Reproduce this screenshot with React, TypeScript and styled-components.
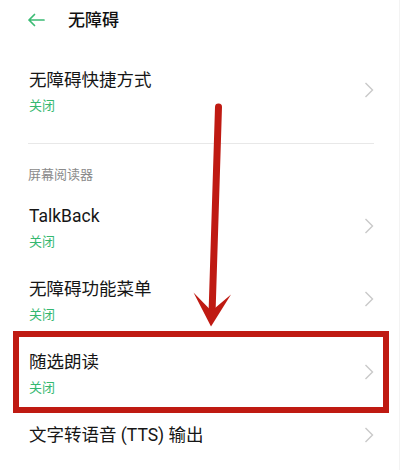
import React from "react";
import styled, { createGlobalStyle } from "styled-components";

const GlobalStyle = createGlobalStyle`
  html, body {
    margin: 0;
    padding: 0;
    background: #ffffff;
  }
  body {
    font-family: "Roboto", "Noto Sans CJK SC", "Noto Sans", sans-serif;
    -webkit-font-smoothing: antialiased;
  }
`;

const Page = styled.div`
  position: relative;
  width: 413px;
  height: 470px;
  overflow: hidden;
  background: #ffffff;
  box-sizing: border-box;
`;

const Screen = styled.div`
  width: 400px;
  height: 470px;
  border-right: 1px solid #f3f3f3;
  box-sizing: border-box;
  display: flex;
  flex-direction: column;
`;

const Header = styled.header`
  height: 40px;
  display: flex;
  align-items: center;
  padding-left: 27px;
  gap: 23px;
`;

const HeaderTitle = styled.h1`
  margin: 0;
  font-size: 17px;
  font-weight: 500;
  color: #111111;
  line-height: 24px;
`;

const Row = styled.div<{ $top: number; $bottom: number }>`
  display: flex;
  align-items: center;
  padding: ${(p) => p.$top}px 25px ${(p) => p.$bottom}px 29px;
`;

const RowText = styled.div`
  flex: 1;
  display: flex;
  flex-direction: column;
`;

const RowTitle = styled.div`
  font-size: 17.5px;
  line-height: 24px;
  color: #161616;
`;

const RowSub = styled.div`
  margin-top: 4px;
  font-size: 13px;
  line-height: 20px;
  color: #35b870;
`;

const Divider = styled.div`
  height: 1px;
  background: #e8e8e8;
  margin: 14px 25px 0 28px;
`;

const SectionHeader = styled.div`
  margin-top: 21px;
  padding: 0 28px 7px;
  font-size: 13px;
  line-height: 20px;
  color: #8a8a8a;
`;

const Chevron = styled.svg`
  width: 10px;
  height: 16px;
  flex: none;
`;

const Highlight = styled.div`
  position: absolute;
  left: 13px;
  top: 331px;
  width: 376px;
  height: 82px;
  box-sizing: border-box;
  border: 6px solid #bf1a12;
  pointer-events: none;
`;

const ArrowLayer = styled.svg`
  position: absolute;
  left: 0;
  top: 0;
  width: 413px;
  height: 470px;
  pointer-events: none;
`;

const ChevronIcon = ({ shift = 0 }: { shift?: number }) => (
  <Chevron viewBox="0 0 10 16" style={shift ? { marginTop: shift } : undefined}>
    <path d="M1.5 1 L8.5 8 L1.5 15" fill="none" stroke="#c9c9c9" strokeWidth="1.4" />
  </Chevron>
);

type Item = { title: string; sub?: string; top: number; bottom: number };

const items: Item[] = [
  { title: "TalkBack", sub: "关闭", top: 12, bottom: 13 },
  { title: "无障碍功能菜单", sub: "关闭", top: 12, bottom: 13 },
  { title: "随选朗读", sub: "关闭", top: 12, bottom: 13 },
  { title: "文字转语音 (TTS) 输出", top: 12, bottom: 13 },
];

export default function App() {
  return (
    <Page>
      <GlobalStyle />
      <Screen>
        <Header>
          <svg width="18" height="14" viewBox="0 0 18 14">
            <path
              d="M17 7 H2 M7.5 1.5 L2 7 L7.5 12.5"
              fill="none"
              stroke="#3bbb74"
              strokeWidth="1.7"
              strokeLinecap="round"
              strokeLinejoin="round"
            />
          </svg>
          <HeaderTitle>无障碍</HeaderTitle>
        </Header>
        <Row $top={28} $bottom={13}>
          <RowText>
            <RowTitle>无障碍快捷方式</RowTitle>
            <RowSub>关闭</RowSub>
          </RowText>
          <ChevronIcon shift={-4} />
        </Row>
        <Divider />
        <SectionHeader>屏幕阅读器</SectionHeader>
        {items.map((it) => (
          <Row key={it.title} $top={it.top} $bottom={it.bottom}>
            <RowText>
              <RowTitle>{it.title}</RowTitle>
              {it.sub && <RowSub>{it.sub}</RowSub>}
            </RowText>
            <ChevronIcon shift={it.sub ? -4 : 0} />
          </Row>
        ))}
      </Screen>
      <Highlight />
      <ArrowLayer viewBox="0 0 413 470">
        <line
          x1="218.5"
          y1="107"
          x2="212"
          y2="314"
          stroke="#bf1a12"
          strokeWidth="7"
          strokeLinecap="round"
        />
        <path d="M193.5 292.5 L211.5 311 L231 294.5 L211 326.5 Z" fill="#bf1a12" />
      </ArrowLayer>
    </Page>
  );
}
